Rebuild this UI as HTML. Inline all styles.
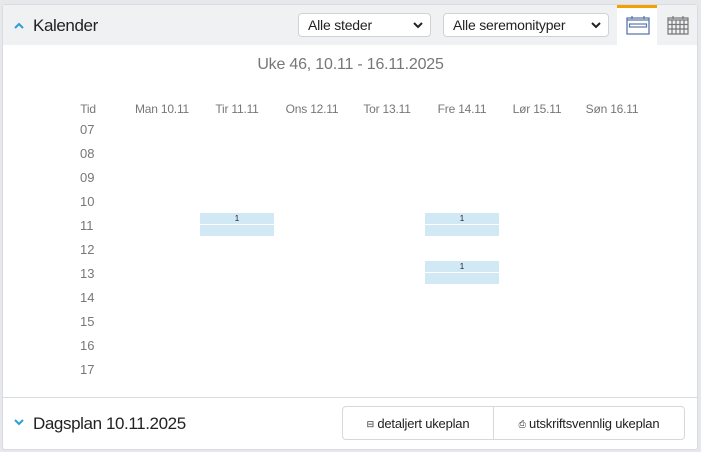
<!DOCTYPE html>
<html><head><meta charset="utf-8"><style>
*{box-sizing:border-box;margin:0;padding:0}
body{width:701px;height:452px;background:#e6e8eb;font-family:"Liberation Sans",sans-serif;position:relative;overflow:hidden}
.panel{position:absolute;left:2px;top:4px;width:696px;height:446px;background:#fff;border:1px solid #d8dbdf;border-radius:3px}
.hdr{position:absolute;width:694px;height:40px;background:#f0f1f3}
.t{position:absolute;color:#222}
.sel{position:absolute;top:13px;height:24px;background:#fff;border:1px solid #cfd3d7;border-radius:4px;font-size:14px;color:#222;padding:3px 0 0 9px;letter-spacing:-0.2px}
.sel svg{position:absolute;right:7px;top:8px}
.g{position:absolute;color:#777;font-size:12px;transform:translateX(-50%);letter-spacing:-0.2px}
.h{position:absolute;left:80px;color:#777;font-size:13px}
.blk{position:absolute;width:74px;height:11px;background:#d0e9f5;font-size:8px;text-align:center;line-height:11px;color:#222}
.btn{position:absolute;top:406px;height:34px;border:1px solid #d5d8dc;background:#fff;font-size:13px;color:#222;padding-top:9px;text-align:center;letter-spacing:-0.2px}
.btn small{font-size:9px;vertical-align:1px}
</style></head><body>
<div class="panel"></div>
<div class="hdr" style="left:3px;top:5px"></div>
<svg style="position:absolute;left:14px;top:22px" width="10" height="7"><path d="M1 6L5 2L9 6" stroke="#2a9fd6" stroke-width="2" fill="none"/></svg>
<div class="t" style="left:33px;top:16px;font-size:17px;letter-spacing:-0.4px">Kalender</div>
<div class="sel" style="left:298px;width:133px">Alle steder<svg width="10" height="7"><path d="M1 1L5 5L9 1" stroke="#222" stroke-width="2" fill="none"/></svg></div>
<div class="sel" style="left:443px;width:166px">Alle seremonityper<svg width="10" height="7"><path d="M1 1L5 5L9 1" stroke="#222" stroke-width="2" fill="none"/></svg></div>
<div style="position:absolute;left:617px;top:5px;width:40px;height:40px;background:#fff;border-top:3px solid #f5a000"></div>
<svg style="position:absolute;left:626px;top:15px" width="24" height="20"><path d="M1 3H23V19H1Z M1 5H23" stroke="#5a78a8" stroke-width="1.3" fill="none"/><path d="M6 1V4M18 1V4" stroke="#5a78a8" stroke-width="1.3"/><rect x="3.5" y="9" width="17" height="3" stroke="#5a78a8" stroke-width="1.2" fill="none"/></svg>
<svg style="position:absolute;left:667px;top:15px" width="22" height="20"><g stroke="#777" stroke-width="1.2" fill="none"><path d="M1 3H21V19H1Z M1 5H21 M1 9.5H21 M1 14H21 M5 5V19 M9 5V19 M13 5V19 M17 5V19"/><path d="M6 1V4M16 1V4"/></g></svg>
<div class="t" style="left:0;width:701px;text-align:center;top:56px;font-size:16px;color:#777;letter-spacing:-0.2px">Uke 46, 10.11 - 16.11.2025</div>
<div class="g" style="left:88px;top:102px">Tid</div>
<div class="g" style="left:162px;top:102px">Man 10.11</div>
<div class="g" style="left:237px;top:102px">Tir 11.11</div>
<div class="g" style="left:312px;top:102px">Ons 12.11</div>
<div class="g" style="left:387px;top:102px">Tor 13.11</div>
<div class="g" style="left:462px;top:102px">Fre 14.11</div>
<div class="g" style="left:537px;top:102px">Lør 15.11</div>
<div class="g" style="left:612px;top:102px">Søn 16.11</div>
<div class="h" style="top:122px">07</div><div class="h" style="top:146px">08</div><div class="h" style="top:170px">09</div><div class="h" style="top:194px">10</div><div class="h" style="top:218px">11</div><div class="h" style="top:242px">12</div><div class="h" style="top:266px">13</div><div class="h" style="top:290px">14</div><div class="h" style="top:314px">15</div><div class="h" style="top:338px">16</div><div class="h" style="top:362px">17</div>
<div class="blk" style="left:200px;top:213px">1</div><div class="blk" style="left:200px;top:225px"></div>
<div class="blk" style="left:425px;top:213px">1</div><div class="blk" style="left:425px;top:225px"></div>
<div class="blk" style="left:425px;top:261px">1</div><div class="blk" style="left:425px;top:273px"></div>
<div style="position:absolute;left:3px;top:397px;width:694px;height:1px;background:#d8dbdf"></div>
<svg style="position:absolute;left:14px;top:419px" width="10" height="7"><path d="M1 1L5 5L9 1" stroke="#2a9fd6" stroke-width="2" fill="none"/></svg>
<div class="t" style="left:33px;top:414px;font-size:17px;letter-spacing:-0.4px">Dagsplan 10.11.2025</div>
<div class="btn" style="left:342px;width:152px;border-radius:4px 0 0 4px"><small>⊟</small> detaljert ukeplan</div>
<div class="btn" style="left:493px;width:192px;border-radius:0 4px 4px 0"><small>⎙</small> utskriftsvennlig ukeplan</div>
</body></html>
